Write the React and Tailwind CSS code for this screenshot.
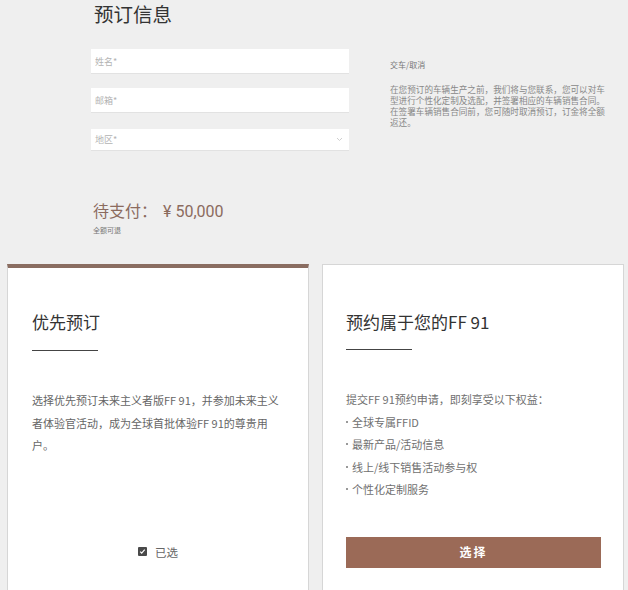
import { useState } from 'react';

const cjk = "font-['Noto_Sans_CJK_SC','Noto_Sans',sans-serif]";

function Field({ placeholder }) {
  return (
    <input
      placeholder={placeholder}
      className="block w-[258px] h-[24px] bg-white pl-[4px] text-[9px] text-[#444] placeholder:text-[#b3b3b3] shadow-[0_1px_0_#e2e2e2] outline-none"
    />
  );
}

function RegionSelect() {
  return (
    <div className="flex items-center justify-between w-[258px] h-[21px] bg-white pl-[4px] pr-[6px] shadow-[0_1px_0_#e2e2e2]">
      <span className="text-[9px] text-[#b3b3b3]">地区*</span>
      <svg width="7" height="5" viewBox="0 0 7 5" fill="none">
        <path d="M1 1l2.5 2.5L6 1" stroke="#cfcfcf" strokeWidth="1" />
      </svg>
    </div>
  );
}

function Perk({ children }) {
  return (
    <p className="flex items-center">
      <span className="w-[2px] h-[2px] rounded-full bg-[#777] mr-[4px]" />
      {children}
    </p>
  );
}

export default function App() {
  const [picked, setPicked] = useState(true);

  return (
    <div className={`w-[628px] h-[590px] overflow-hidden bg-[#efefef] ${cjk}`}>
      {/* 预订信息 */}
      <div className="flex pl-[91px] pt-[1px]">
        <div className="w-[258px]">
          <h1 className="pl-[3px] text-[19.5px] leading-[26px] text-[#333] font-normal">预订信息</h1>
          <div className="mt-[22px]">
            <Field placeholder="姓名*" />
            <div className="mt-[15px]">
              <Field placeholder="邮箱*" />
            </div>
            <div className="mt-[17px]">
              <RegionSelect />
            </div>
          </div>
        </div>

        <div className="ml-[41px] pt-[58px] w-[220px]">
          <p className="text-[8px] leading-[12px] text-[#777]">交车/取消</p>
          <p className="mt-[13px] w-[216px] text-[8.6px] leading-[11px] text-[#888]">
            在您预订的车辆生产之前，我们将与您联系，您可以对车型进行个性化定制及选配，并签署相应的车辆销售合同。在签署车辆销售合同前，您可随时取消预订，订金将全额返还。
          </p>
        </div>
      </div>

      {/* 待支付 */}
      <div className="pl-[93px] mt-[49px]">
        <p className="text-[16px] leading-[22px] text-[#8b6b5e]">
          待支付：<span className="ml-[6px] font-['Roboto',sans-serif]">¥ 50,000</span>
        </p>
        <p className="mt-[2px] text-[7px] leading-[10px] text-[#777]">全额可退</p>
      </div>

      {/* 两张卡片 */}
      <div className="flex gap-[13px] pl-[7px] mt-[29px]">
        <div className="w-[302px] h-[340px] bg-white border border-[#d6d6d6] border-t-[4px] border-t-[#8a6d61] px-[24px] pt-[42px]">
          <h2 className="text-[17px] leading-[24px] text-[#333] font-normal">优先预订</h2>
          <div className="mt-[16px] w-[66px] h-px bg-[#444]" />
          <p className="mt-[38px] w-[252px] text-[11px] leading-[22.5px] text-[#666]">
            选择优先预订未来主义者版FF 91，并参加未来主义者体验官活动，成为全球首批体验FF 91的尊贵用户。
          </p>
          <label className="mt-[85px] ml-[106px] flex items-center gap-[8px] cursor-pointer">
            <span
              onClick={() => setPicked(!picked)}
              className="flex items-center justify-center w-[9px] h-[9px] rounded-[1px] bg-[#4a4a4a]"
            >
              {picked && (
                <svg width="7" height="7" viewBox="0 0 7 7" fill="none">
                  <path d="M1.2 3.6l1.5 1.5 3-3.4" stroke="#fff" strokeWidth="1.2" />
                </svg>
              )}
            </span>
            <span className="text-[11.5px] leading-[20px] text-[#666]">已选</span>
          </label>
        </div>

        <div className="w-[302px] h-[340px] bg-white border border-[#d6d6d6] px-[23px] pt-[45px]">
          <h2 className="text-[17px] leading-[24px] text-[#333] font-normal">预约属于您的FF 91</h2>
          <div className="mt-[15px] w-[66px] h-px bg-[#444]" />
          <div className="mt-[38px] text-[11px] leading-[22.5px] text-[#707070]">
            <p>提交FF 91预约申请，即刻享受以下权益：</p>
            <Perk>全球专属FFID</Perk>
            <Perk>最新产品/活动信息</Perk>
            <Perk>线上/线下销售活动参与权</Perk>
            <Perk>个性化定制服务</Perk>
          </div>
          <button className="mt-[36px] w-[255px] h-[31px] bg-[#9b6a57] text-white text-[12px] font-bold tracking-[2px]">
            选择
          </button>
        </div>
      </div>
    </div>
  );
}
